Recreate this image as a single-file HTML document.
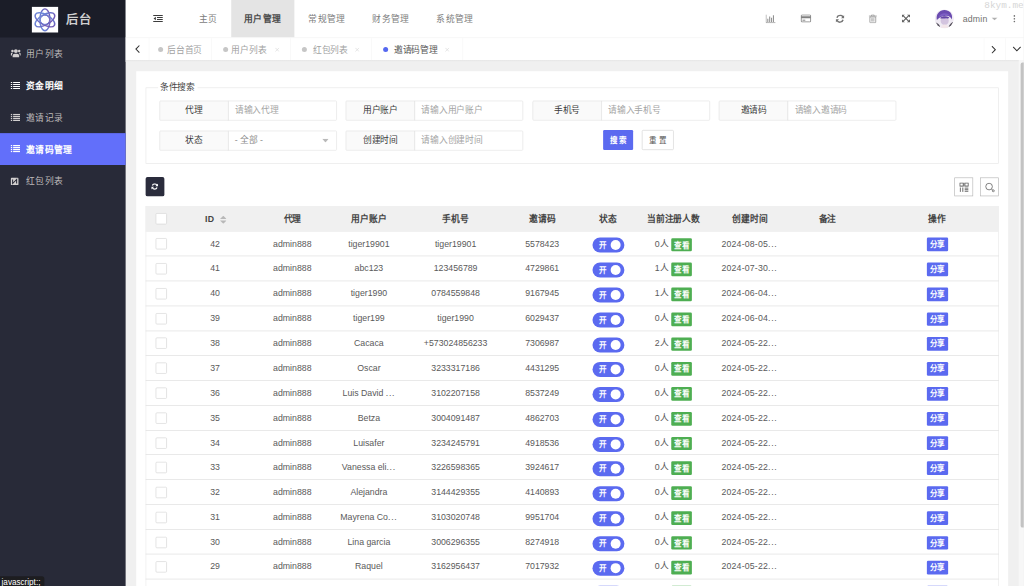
<!DOCTYPE html>
<html lang="zh-CN"><head><meta charset="utf-8"><title>后台</title>
<style>
*{box-sizing:border-box;margin:0;padding:0}
html,body{width:1024px;height:586px;overflow:hidden;background:#f0f0f0}
body{font-family:"Liberation Sans",sans-serif;font-size:14px;color:#666}
#wrap{position:absolute;left:0;top:0;width:1638.4px;height:937.6px;transform:scale(.625);transform-origin:0 0;overflow:hidden;background:#f0f0f0}
.abs{position:absolute}
svg{display:block}
/* sidebar */
#side{position:absolute;left:0;top:0;width:201.3px;height:937.6px;background:#282a38}
#logo{position:absolute;left:0;top:0;width:201.3px;height:60px;background:#1b1d28}
#logo .img{position:absolute;left:51.4px;top:11px;width:41.8px;height:40.8px;background:#fff}
#logo h1{position:absolute;left:105.3px;top:1px;height:60px;line-height:61px;font-size:19.6px;font-weight:bold;color:#d0d0d0;letter-spacing:1.6px;white-space:nowrap}
.mi{position:absolute;left:0;width:201.3px;height:51px;line-height:51px;color:#bebbbb;font-size:14px;letter-spacing:1px;white-space:nowrap}
.mi span{position:absolute;left:41.6px;top:1.2px}
.mi svg{position:absolute;left:17px;top:19px}
.mi.hov{color:#fff;font-weight:bold}
.mi.act{background:#626ffa;color:#fff;font-weight:bold}
/* header */
#hdr{position:absolute;left:201px;top:0;width:1437.4px;height:60px;background:#fff}
.nav{position:absolute;top:0;height:60px;line-height:60px;text-align:center;color:#7c7c7c;font-size:14px;letter-spacing:1px;white-space:nowrap}
.nav.this{background:#e4e4e4;color:#4a4a4a;font-weight:bold}
.hi{position:absolute}
/* tabs */
#tabs{position:absolute;left:201px;top:60px;width:1437.4px;height:36px;background:#fff;border-top:1px solid #f3f3f3}
.tab{position:absolute;top:0;height:35px;line-height:36px;font-size:14px;color:#a2a2a2;white-space:nowrap}
.tab.on{color:#555}
.dot{position:absolute;width:8px;height:8px;border-radius:50%;background:#cfcfcf}
.sep{position:absolute;top:0;width:1px;height:35px;background:#f6f6f6}
.x{position:absolute;top:0;font-size:13px;color:#c8c8c8}
/* card */
#card{position:absolute;left:217.6px;top:113.8px;width:1395.4px;height:900px;background:#fff}
fieldset{position:absolute;border:1px solid #e6e6e6;background:transparent}
.legend{position:absolute;background:#fff;padding:0 4px 0 3px;font-size:14px;color:#444;line-height:20px;white-space:nowrap}
.fg{position:absolute;height:32px;width:283.8px}
.fg .lb{position:absolute;left:0;top:0;width:111px;height:32px;line-height:29px;border:1px solid #e2e2e2;background:#fafafa;color:#3a3a3a;text-align:center;border-radius:2px 0 0 2px;font-size:14px;white-space:nowrap;overflow:hidden}
.fg .in{position:absolute;left:110px;top:0;width:173.8px;height:32px;line-height:28.5px;border:1px solid #e2e2e2;background:#fff;color:#a4a4a4;padding-left:10px;border-radius:0 2px 2px 0;font-size:14px;white-space:nowrap;overflow:hidden}
.btn{position:absolute;height:32px;line-height:32px;text-align:center;font-size:12px;border-radius:2px;white-space:nowrap}
/* table */
#thead{position:absolute;background:#f0f0f0}
.tr{position:absolute;border-bottom:1px solid #dcdcdc}
.c{position:absolute;top:0;text-align:center;white-space:nowrap;font-size:14px;color:#5a5a5a}
.th{font-weight:bold;color:#444}
.cb{position:absolute;width:18px;height:18px;border:1px solid #d4d4d4;border-radius:2px;background:#fff}
.sw{position:absolute;width:51px;height:24px;border-radius:12px;background:#5b6af0;font-weight:bold;color:#fff;font-size:12px;line-height:24px}
.sw i{position:absolute;right:6px;top:4px;width:16px;height:16px;border-radius:50%;background:#fff}
.sw em{position:absolute;left:10px;top:0;font-style:normal}
.el{letter-spacing:1.15px}
.gb{position:absolute;height:21.8px;line-height:22px;font-weight:bold;border-radius:2px;color:#fff;font-size:12px;text-align:center;white-space:nowrap;overflow:hidden}
</style></head>
<body><div id="wrap">
<div id="card"></div>
<fieldset style="left:232.96px;top:139.68px;width:1364.64px;height:122.24px"></fieldset>
<div class="legend" style="left:252.80px;top:129.28px">条件搜索</div>
<div class="fg" style="left:254.72px;top:160.80px"><div class="lb">代理</div><div class="in">请输入代理</div></div>
<div class="fg" style="left:553.28px;top:160.80px"><div class="lb">用户账户</div><div class="in">请输入用户账户</div></div>
<div class="fg" style="left:851.84px;top:160.80px"><div class="lb">手机号</div><div class="in">请输入手机号</div></div>
<div class="fg" style="left:1150.40px;top:160.80px"><div class="lb">邀请码</div><div class="in">请输入邀请码</div></div>
<div class="fg" style="left:254.72px;top:208.64px"><div class="lb">状态</div><div class="in" style="color:#8c8c8c">- 全部 -<svg class="abs" style="right:11.500px;top:12px" width="11.500" height="6" viewBox="0 0 12 7"><path d="M0 0h12L6 7z" fill="#b9b9b9"/></svg></div></div>
<div class="fg" style="left:553.28px;top:208.64px"><div class="lb">创建时间</div><div class="in">请输入创建时间</div></div>
<div class="btn" style="left:964.80px;top:208.32px;width:48.32px;background:#5b6af0;color:#fff;font-weight:bold">搜 索</div>
<div class="btn" style="left:1027.20px;top:208.32px;width:50.40px;background:#fff;color:#555;border:1px solid #d2d2d2;line-height:30px">重 置</div>
<div class="abs" style="left:232.64px;top:283.20px;width:30.56px;height:30.72px;background:#2a2c3c;border-radius:3px"><svg class="abs" style="left:9.8px;top:9.8px" width="11" height="11" viewBox="0 0 16 16"><path d="M13.400 5.600A5.800 5.800 0 0 0 2.600 5.600M2.600 10.400A5.800 5.800 0 0 0 13.400 10.400" fill="none" stroke="#fff" stroke-width="3"/><path d="M16 1v6.500h-6.500zM0 15v-6.500h6.500z" fill="#fff"/></svg></div>
<div class="abs" style="left:1526.88px;top:283.52px;width:30.56px;height:30.72px;background:#fff;border:1px solid #b4b4b4"><svg class="abs" style="left:7px;top:7px" width="15" height="15" viewBox="0 0 15 15"><rect x=".75" y=".75" width="5.5" height="5" fill="none" stroke="#555" stroke-width="1.5"/><rect x="8.75" y=".75" width="5.5" height="5" fill="none" stroke="#555" stroke-width="1.5"/><path d="M1.5 8v7M5.5 8v7M8.5 9h6M8.5 11.5h6M8.5 14h6" stroke="#555" stroke-width="1.4"/></svg></div>
<div class="abs" style="left:1567.52px;top:283.52px;width:30.56px;height:30.72px;background:#fff;border:1px solid #b4b4b4"><svg class="abs" style="left:7px;top:7px" width="16" height="16" viewBox="0 0 16 16"><circle cx="6.5" cy="6.5" r="5.3" fill="none" stroke="#666" stroke-width="1.3"/><path d="M10.5 10.5l2 2" stroke="#666" stroke-width="1.4"/><circle cx="13.3" cy="13.3" r="1.6" fill="none" stroke="#666" stroke-width="1.2"/></svg></div>
<div class="abs" style="left:232.96px;top:330.24px;width:1364.64px;height:640.00px;border:1px solid #e9e9e9;border-bottom:0"></div>
<div id="thead" style="left:232.96px;top:330.24px;width:1364.64px;height:40.32px;line-height:40.32px"><div class="cb" style="left:24.96px;top:50%;margin:-9px 0 0 -9px"></div><div class="c th" style="left:39.20px;width:144.00px"><span style="position:relative;left:-8.5px;letter-spacing:.6px">ID</span><svg class="abs" style="left:79.5px;top:14.5px" width="10.500" height="13" viewBox="0 0 9 13" preserveAspectRatio="none"><path d="M4.5 0L9 5.2H0z" fill="#b8b8b8"/><path d="M4.5 13L9 7.8H0z" fill="#b8b8b8"/></svg></div><div class="c th" style="left:162.72px;width:144.00px">代理</div><div class="c th" style="left:285.28px;width:144.00px">用户账户</div><div class="c th" style="left:424.00px;width:144.00px">手机号</div><div class="c th" style="left:562.56px;width:144.00px">邀请码</div><div class="c th" style="left:667.52px;width:144.00px">状态</div><div class="c th" style="left:772.48px;width:144.00px">当前注册人数</div><div class="c th" style="left:895.04px;width:144.00px">创建时间</div><div class="c th" style="left:1019.04px;width:144.00px">备注</div><div class="c th" style="left:1194.08px;width:144.00px">操作</div></div>
<div class="tr" style="left:232.96px;top:370.56px;width:1364.64px;height:39.76px;line-height:38.64px"><div class="cb" style="left:24.96px;top:50%;margin:-8.5px 0 0 -9px"></div><div class="c" style="left:39.20px;width:144.00px">42</div><div class="c" style="left:162.72px;width:144.00px">admin888</div><div class="c" style="left:285.28px;width:144.00px">tiger19901</div><div class="c" style="left:424.00px;width:144.00px">tiger19901</div><div class="c" style="left:562.56px;width:144.00px">5578423</div><div class="sw" style="left:714.72px;top:9.92px"><em>开</em><i></i></div><div class="c" style="left:791.04px;width:45.28px;text-align:right">0人</div><div class="gb" style="left:840.80px;top:10.00px;width:33.36px;background:#4eae52">查看</div><div class="c" style="left:921.44px;width:99.20px;text-align:left;letter-spacing:.28px">2024-08-05<span class="el">...</span></div><div class="gb" style="left:1249.60px;top:9.84px;width:34.08px;background:#5b6af0">分享</div></div>
<div class="tr" style="left:232.96px;top:410.32px;width:1364.64px;height:39.76px;line-height:38.64px"><div class="cb" style="left:24.96px;top:50%;margin:-8.5px 0 0 -9px"></div><div class="c" style="left:39.20px;width:144.00px">41</div><div class="c" style="left:162.72px;width:144.00px">admin888</div><div class="c" style="left:285.28px;width:144.00px">abc123</div><div class="c" style="left:424.00px;width:144.00px">123456789</div><div class="c" style="left:562.56px;width:144.00px">4729861</div><div class="sw" style="left:714.72px;top:9.92px"><em>开</em><i></i></div><div class="c" style="left:791.04px;width:45.28px;text-align:right">1人</div><div class="gb" style="left:840.80px;top:10.00px;width:33.36px;background:#4eae52">查看</div><div class="c" style="left:921.44px;width:99.20px;text-align:left;letter-spacing:.28px">2024-07-30<span class="el">...</span></div><div class="gb" style="left:1249.60px;top:9.84px;width:34.08px;background:#5b6af0">分享</div></div>
<div class="tr" style="left:232.96px;top:450.08px;width:1364.64px;height:39.76px;line-height:38.64px"><div class="cb" style="left:24.96px;top:50%;margin:-8.5px 0 0 -9px"></div><div class="c" style="left:39.20px;width:144.00px">40</div><div class="c" style="left:162.72px;width:144.00px">admin888</div><div class="c" style="left:285.28px;width:144.00px">tiger1990</div><div class="c" style="left:424.00px;width:144.00px">0784559848</div><div class="c" style="left:562.56px;width:144.00px">9167945</div><div class="sw" style="left:714.72px;top:9.92px"><em>开</em><i></i></div><div class="c" style="left:791.04px;width:45.28px;text-align:right">1人</div><div class="gb" style="left:840.80px;top:10.00px;width:33.36px;background:#4eae52">查看</div><div class="c" style="left:921.44px;width:99.20px;text-align:left;letter-spacing:.28px">2024-06-04<span class="el">...</span></div><div class="gb" style="left:1249.60px;top:9.84px;width:34.08px;background:#5b6af0">分享</div></div>
<div class="tr" style="left:232.96px;top:489.84px;width:1364.64px;height:39.76px;line-height:38.64px"><div class="cb" style="left:24.96px;top:50%;margin:-8.5px 0 0 -9px"></div><div class="c" style="left:39.20px;width:144.00px">39</div><div class="c" style="left:162.72px;width:144.00px">admin888</div><div class="c" style="left:285.28px;width:144.00px">tiger199</div><div class="c" style="left:424.00px;width:144.00px">tiger1990</div><div class="c" style="left:562.56px;width:144.00px">6029437</div><div class="sw" style="left:714.72px;top:9.92px"><em>开</em><i></i></div><div class="c" style="left:791.04px;width:45.28px;text-align:right">0人</div><div class="gb" style="left:840.80px;top:10.00px;width:33.36px;background:#4eae52">查看</div><div class="c" style="left:921.44px;width:99.20px;text-align:left;letter-spacing:.28px">2024-06-04<span class="el">...</span></div><div class="gb" style="left:1249.60px;top:9.84px;width:34.08px;background:#5b6af0">分享</div></div>
<div class="tr" style="left:232.96px;top:529.60px;width:1364.64px;height:39.76px;line-height:38.64px"><div class="cb" style="left:24.96px;top:50%;margin:-8.5px 0 0 -9px"></div><div class="c" style="left:39.20px;width:144.00px">38</div><div class="c" style="left:162.72px;width:144.00px">admin888</div><div class="c" style="left:285.28px;width:144.00px">Cacaca</div><div class="c" style="left:424.00px;width:144.00px">+573024856233</div><div class="c" style="left:562.56px;width:144.00px">7306987</div><div class="sw" style="left:714.72px;top:9.92px"><em>开</em><i></i></div><div class="c" style="left:791.04px;width:45.28px;text-align:right">2人</div><div class="gb" style="left:840.80px;top:10.00px;width:33.36px;background:#4eae52">查看</div><div class="c" style="left:921.44px;width:99.20px;text-align:left;letter-spacing:.28px">2024-05-22<span class="el">...</span></div><div class="gb" style="left:1249.60px;top:9.84px;width:34.08px;background:#5b6af0">分享</div></div>
<div class="tr" style="left:232.96px;top:569.36px;width:1364.64px;height:39.76px;line-height:38.64px"><div class="cb" style="left:24.96px;top:50%;margin:-8.5px 0 0 -9px"></div><div class="c" style="left:39.20px;width:144.00px">37</div><div class="c" style="left:162.72px;width:144.00px">admin888</div><div class="c" style="left:285.28px;width:144.00px">Oscar</div><div class="c" style="left:424.00px;width:144.00px">3233317186</div><div class="c" style="left:562.56px;width:144.00px">4431295</div><div class="sw" style="left:714.72px;top:9.92px"><em>开</em><i></i></div><div class="c" style="left:791.04px;width:45.28px;text-align:right">0人</div><div class="gb" style="left:840.80px;top:10.00px;width:33.36px;background:#4eae52">查看</div><div class="c" style="left:921.44px;width:99.20px;text-align:left;letter-spacing:.28px">2024-05-22<span class="el">...</span></div><div class="gb" style="left:1249.60px;top:9.84px;width:34.08px;background:#5b6af0">分享</div></div>
<div class="tr" style="left:232.96px;top:609.12px;width:1364.64px;height:39.76px;line-height:38.64px"><div class="cb" style="left:24.96px;top:50%;margin:-8.5px 0 0 -9px"></div><div class="c" style="left:39.20px;width:144.00px">36</div><div class="c" style="left:162.72px;width:144.00px">admin888</div><div class="c" style="left:285.28px;width:144.00px">Luis David <span class="el">...</span></div><div class="c" style="left:424.00px;width:144.00px">3102207158</div><div class="c" style="left:562.56px;width:144.00px">8537249</div><div class="sw" style="left:714.72px;top:9.92px"><em>开</em><i></i></div><div class="c" style="left:791.04px;width:45.28px;text-align:right">0人</div><div class="gb" style="left:840.80px;top:10.00px;width:33.36px;background:#4eae52">查看</div><div class="c" style="left:921.44px;width:99.20px;text-align:left;letter-spacing:.28px">2024-05-22<span class="el">...</span></div><div class="gb" style="left:1249.60px;top:9.84px;width:34.08px;background:#5b6af0">分享</div></div>
<div class="tr" style="left:232.96px;top:648.88px;width:1364.64px;height:39.76px;line-height:38.64px"><div class="cb" style="left:24.96px;top:50%;margin:-8.5px 0 0 -9px"></div><div class="c" style="left:39.20px;width:144.00px">35</div><div class="c" style="left:162.72px;width:144.00px">admin888</div><div class="c" style="left:285.28px;width:144.00px">Betza</div><div class="c" style="left:424.00px;width:144.00px">3004091487</div><div class="c" style="left:562.56px;width:144.00px">4862703</div><div class="sw" style="left:714.72px;top:9.92px"><em>开</em><i></i></div><div class="c" style="left:791.04px;width:45.28px;text-align:right">0人</div><div class="gb" style="left:840.80px;top:10.00px;width:33.36px;background:#4eae52">查看</div><div class="c" style="left:921.44px;width:99.20px;text-align:left;letter-spacing:.28px">2024-05-22<span class="el">...</span></div><div class="gb" style="left:1249.60px;top:9.84px;width:34.08px;background:#5b6af0">分享</div></div>
<div class="tr" style="left:232.96px;top:688.64px;width:1364.64px;height:39.76px;line-height:38.64px"><div class="cb" style="left:24.96px;top:50%;margin:-8.5px 0 0 -9px"></div><div class="c" style="left:39.20px;width:144.00px">34</div><div class="c" style="left:162.72px;width:144.00px">admin888</div><div class="c" style="left:285.28px;width:144.00px">Luisafer</div><div class="c" style="left:424.00px;width:144.00px">3234245791</div><div class="c" style="left:562.56px;width:144.00px">4918536</div><div class="sw" style="left:714.72px;top:9.92px"><em>开</em><i></i></div><div class="c" style="left:791.04px;width:45.28px;text-align:right">0人</div><div class="gb" style="left:840.80px;top:10.00px;width:33.36px;background:#4eae52">查看</div><div class="c" style="left:921.44px;width:99.20px;text-align:left;letter-spacing:.28px">2024-05-22<span class="el">...</span></div><div class="gb" style="left:1249.60px;top:9.84px;width:34.08px;background:#5b6af0">分享</div></div>
<div class="tr" style="left:232.96px;top:728.40px;width:1364.64px;height:39.76px;line-height:38.64px"><div class="cb" style="left:24.96px;top:50%;margin:-8.5px 0 0 -9px"></div><div class="c" style="left:39.20px;width:144.00px">33</div><div class="c" style="left:162.72px;width:144.00px">admin888</div><div class="c" style="left:285.28px;width:144.00px">Vanessa eli<span class="el">...</span></div><div class="c" style="left:424.00px;width:144.00px">3226598365</div><div class="c" style="left:562.56px;width:144.00px">3924617</div><div class="sw" style="left:714.72px;top:9.92px"><em>开</em><i></i></div><div class="c" style="left:791.04px;width:45.28px;text-align:right">0人</div><div class="gb" style="left:840.80px;top:10.00px;width:33.36px;background:#4eae52">查看</div><div class="c" style="left:921.44px;width:99.20px;text-align:left;letter-spacing:.28px">2024-05-22<span class="el">...</span></div><div class="gb" style="left:1249.60px;top:9.84px;width:34.08px;background:#5b6af0">分享</div></div>
<div class="tr" style="left:232.96px;top:768.16px;width:1364.64px;height:39.76px;line-height:38.64px"><div class="cb" style="left:24.96px;top:50%;margin:-8.5px 0 0 -9px"></div><div class="c" style="left:39.20px;width:144.00px">32</div><div class="c" style="left:162.72px;width:144.00px">admin888</div><div class="c" style="left:285.28px;width:144.00px">Alejandra</div><div class="c" style="left:424.00px;width:144.00px">3144429355</div><div class="c" style="left:562.56px;width:144.00px">4140893</div><div class="sw" style="left:714.72px;top:9.92px"><em>开</em><i></i></div><div class="c" style="left:791.04px;width:45.28px;text-align:right">0人</div><div class="gb" style="left:840.80px;top:10.00px;width:33.36px;background:#4eae52">查看</div><div class="c" style="left:921.44px;width:99.20px;text-align:left;letter-spacing:.28px">2024-05-22<span class="el">...</span></div><div class="gb" style="left:1249.60px;top:9.84px;width:34.08px;background:#5b6af0">分享</div></div>
<div class="tr" style="left:232.96px;top:807.92px;width:1364.64px;height:39.76px;line-height:38.64px"><div class="cb" style="left:24.96px;top:50%;margin:-8.5px 0 0 -9px"></div><div class="c" style="left:39.20px;width:144.00px">31</div><div class="c" style="left:162.72px;width:144.00px">admin888</div><div class="c" style="left:285.28px;width:144.00px">Mayrena Co<span class="el">...</span></div><div class="c" style="left:424.00px;width:144.00px">3103020748</div><div class="c" style="left:562.56px;width:144.00px">9951704</div><div class="sw" style="left:714.72px;top:9.92px"><em>开</em><i></i></div><div class="c" style="left:791.04px;width:45.28px;text-align:right">0人</div><div class="gb" style="left:840.80px;top:10.00px;width:33.36px;background:#4eae52">查看</div><div class="c" style="left:921.44px;width:99.20px;text-align:left;letter-spacing:.28px">2024-05-22<span class="el">...</span></div><div class="gb" style="left:1249.60px;top:9.84px;width:34.08px;background:#5b6af0">分享</div></div>
<div class="tr" style="left:232.96px;top:847.68px;width:1364.64px;height:39.76px;line-height:38.64px"><div class="cb" style="left:24.96px;top:50%;margin:-8.5px 0 0 -9px"></div><div class="c" style="left:39.20px;width:144.00px">30</div><div class="c" style="left:162.72px;width:144.00px">admin888</div><div class="c" style="left:285.28px;width:144.00px">Lina garcia</div><div class="c" style="left:424.00px;width:144.00px">3006296355</div><div class="c" style="left:562.56px;width:144.00px">8274918</div><div class="sw" style="left:714.72px;top:9.92px"><em>开</em><i></i></div><div class="c" style="left:791.04px;width:45.28px;text-align:right">0人</div><div class="gb" style="left:840.80px;top:10.00px;width:33.36px;background:#4eae52">查看</div><div class="c" style="left:921.44px;width:99.20px;text-align:left;letter-spacing:.28px">2024-05-22<span class="el">...</span></div><div class="gb" style="left:1249.60px;top:9.84px;width:34.08px;background:#5b6af0">分享</div></div>
<div class="tr" style="left:232.96px;top:887.44px;width:1364.64px;height:39.76px;line-height:38.64px"><div class="cb" style="left:24.96px;top:50%;margin:-8.5px 0 0 -9px"></div><div class="c" style="left:39.20px;width:144.00px">29</div><div class="c" style="left:162.72px;width:144.00px">admin888</div><div class="c" style="left:285.28px;width:144.00px">Raquel</div><div class="c" style="left:424.00px;width:144.00px">3162956437</div><div class="c" style="left:562.56px;width:144.00px">7017932</div><div class="sw" style="left:714.72px;top:9.92px"><em>开</em><i></i></div><div class="c" style="left:791.04px;width:45.28px;text-align:right">0人</div><div class="gb" style="left:840.80px;top:10.00px;width:33.36px;background:#4eae52">查看</div><div class="c" style="left:921.44px;width:99.20px;text-align:left;letter-spacing:.28px">2024-05-22<span class="el">...</span></div><div class="gb" style="left:1249.60px;top:9.84px;width:34.08px;background:#5b6af0">分享</div></div>
<div class="tr" style="left:232.96px;top:927.20px;width:1364.64px;height:39.76px;line-height:38.64px"><div class="cb" style="left:24.96px;top:50%;margin:-8.5px 0 0 -9px"></div><div class="c" style="left:39.20px;width:144.00px"></div><div class="c" style="left:162.72px;width:144.00px"></div><div class="c" style="left:285.28px;width:144.00px"></div><div class="c" style="left:424.00px;width:144.00px"></div><div class="c" style="left:562.56px;width:144.00px"></div><div class="sw" style="left:714.72px;top:9.92px"><em>开</em><i></i></div><div class="c" style="left:791.04px;width:45.28px;text-align:right"></div><div class="gb" style="left:840.80px;top:10.00px;width:33.36px;background:#4eae52">查看</div><div class="c" style="left:921.44px;width:99.20px;text-align:left;letter-spacing:.28px"></div><div class="gb" style="left:1249.60px;top:9.84px;width:34.08px;background:#5b6af0">分享</div></div>
<div id="side"><div id="logo"><div class="img"><svg width="41.8" height="40.8" viewBox="0 0 42 41"><defs><linearGradient id="lg" gradientUnits="userSpaceOnUse" x1="-18" y1="8" x2="18" y2="-8"><stop offset="0" stop-color="#6f9be6"/><stop offset=".55" stop-color="#6b6fc8"/><stop offset="1" stop-color="#7b45a0"/></linearGradient></defs><g fill="none" stroke="url(#lg)" stroke-width="2.3" transform="translate(21 20.8)"><ellipse rx="8.2" ry="17.6"/><ellipse rx="8.2" ry="17.6" transform="rotate(60)"/><ellipse rx="8.2" ry="17.6" transform="rotate(120)"/><circle r="7.4" stroke-width="1.6"/></g></svg></div><h1>后台</h1></div>
<div class="mi " style="top:60px"><svg style="left:16.600px;top:17.700px" width="16.800" height="14.600" viewBox="0 0 16 14"><circle cx="8" cy="3.6" r="3" fill="#d2cfcf"/><path d="M3 13.5v-2.7c0-2 1.5-3.3 3.3-3.3h3.4c1.800 0 3.300 1.300 3.300 3.300v2.700z" fill="#d2cfcf"/><circle cx="2.8" cy="3.4" r="2" fill="#d2cfcf"/><circle cx="13.2" cy="3.400" r="2" fill="#d2cfcf"/><path d="M0 10.500v-2.200c0-1.400 1-2.200 2.200-2.200h1.600c-1.200 0.900-1.800 2-1.800 3.500v0.900zM16 10.500v-2.200c0-1.400-1-2.200-2.200-2.200h-1.600c1.200 0.900 1.800 2 1.800 3.500v0.900z" fill="#d2cfcf"/></svg><span>用户列表</span></div>
<div class="mi hov" style="top:111px"><svg style="top:20.20px" width="15" height="11.500" viewBox="0 0 15 11.500"><path d="M0 0h2.500v1.900h-2.500zM4 0h11v1.900h-11zM0 3.200h2.500v1.900h-2.500zM4 3.200h11v1.900h-11zM0 6.400h2.500v1.900h-2.500zM4 6.400h11v1.900h-11zM0 9.600h2.500v1.900h-2.500zM4 9.600h11v1.900h-11z" fill="#fff"/></svg><span>资金明细</span></div>
<div class="mi " style="top:162px"><svg style="top:20.40px" width="15" height="11.500" viewBox="0 0 15 11.500"><path d="M0 0h2.500v1.900h-2.500zM4 0h11v1.900h-11zM0 3.200h2.500v1.900h-2.500zM4 3.200h11v1.900h-11zM0 6.400h2.500v1.900h-2.500zM4 6.400h11v1.900h-11zM0 9.600h2.500v1.900h-2.500zM4 9.600h11v1.900h-11z" fill="#d2cfcf"/></svg><span>邀请记录</span></div>
<div class="mi act" style="top:213px"><svg style="top:19.00px" width="15" height="11.500" viewBox="0 0 15 11.500"><path d="M0 0h2.500v1.900h-2.500zM4 0h11v1.900h-11zM0 3.200h2.500v1.900h-2.500zM4 3.200h11v1.900h-11zM0 6.400h2.500v1.900h-2.500zM4 6.400h11v1.900h-11zM0 9.600h2.500v1.900h-2.500zM4 9.600h11v1.900h-11z" fill="#fff"/></svg><span>邀请码管理</span></div>
<div class="mi " style="top:264px"><svg style="top:19.6px;left:17.3px" width="12.800" height="12.800" viewBox="0 0 14 14"><rect width="14" height="14" rx="2.5" fill="#d2cfcf"/><path d="M3.500 3.500v7l7-7v7" fill="none" stroke="#282a38" stroke-width="1.800"/></svg><span>红包列表</span></div>
</div>
<div id="hdr"><svg class="abs" style="left:44.28px;top:24.00px" width="15.400" height="11.400" viewBox="0 0 15 11"><path d="M0 0h15v1.700h-15zM6 3.100h9v1.700h-9zM6 6.200h9v1.700h-9zM0 9.300h15v1.700h-15z" fill="#3c3c3c"/><path d="M4.300 2.700v5.600l-3.700-2.800z" fill="#3c3c3c"/></svg><div class="nav " style="left:96.60px;width:72.00px">主页</div><div class="nav this" style="left:168.60px;width:101.60px">用户管理</div><div class="nav " style="left:271.00px;width:102.40px">常规管理</div><div class="nav " style="left:373.40px;width:102.40px">财务管理</div><div class="nav " style="left:475.80px;width:102.40px">系统管理</div><div class="hi" style="left:1023.96px;top:22.92px"><svg width="16" height="14" viewBox="0 0 16 14"><path d="M.6 0v13.400h15.400" fill="none" stroke="#929292" stroke-width="1.300"/><path d="M3.500 7v5M6.500 3.500v8.500M9.500 5.500v6.500M12.500 1.500v10.500" stroke="#929292" stroke-width="1.700"/></svg></div><div class="hi" style="left:1080.10px;top:23.42px"><svg width="17" height="13" viewBox="0 0 17 13"><rect x=".8" y=".8" width="15.400" height="11.400" rx="1.500" fill="none" stroke="#808080" stroke-width="1.600"/><path d="M.7 3h15.600v3h-15.600z" fill="#808080"/><path d="M3 9.300h4.500" stroke="#808080" stroke-width="1.500"/></svg></div><div class="hi" style="left:1136.00px;top:22.92px"><svg width="14" height="14" viewBox="0 0 16 16"><path d="M13.600 5.200A6 6 0 0 0 2.400 6.200M2.400 10.800A6 6 0 0 0 13.600 9.800" fill="none" stroke="#747474" stroke-width="2.700"/><path d="M15.800 1v6h-6zM.2 15v-6h6z" fill="#747474"/></svg></div><div class="hi" style="left:1189.30px;top:22.92px"><svg width="13" height="14" viewBox="0 0 13 14"><path d="M0 2.700h13M4.500 2.500v-1.800h4v1.800" fill="none" stroke="#929292" stroke-width="1.300"/><path d="M1.800 4.200h9.400v8.300c0 .6-.4 1-1 1h-7.400c-.6 0-1-.4-1-1z" fill="none" stroke="#929292" stroke-width="1.300"/><path d="M4.700 6v5.500M6.500 6v5.500M8.300 6v5.500" stroke="#929292" stroke-width="1"/></svg></div><div class="hi" style="left:1242.10px;top:23.42px"><svg width="13" height="13" viewBox="0 0 14 14"><path d="M2.500 2.500l9 9M11.500 2.500l-9 9" stroke="#606060" stroke-width="2"/><path d="M0 0h5.400l-5.400 5.400zM14 0v5.400l-5.400-5.400zM0 14v-5.400l5.400 5.400zM14 14h-5.400l5.400-5.400z" fill="#606060"/></svg></div><div class="abs" style="left:1295.20px;top:14.92px;width:30px;height:30px;border-radius:50%;overflow:hidden;background:#efeaf3"><svg width="30" height="30" viewBox="0 0 30 30"><rect width="30" height="30" fill="#efeaf3"/><path d="M3 17c-2-9 4-16 12-16s14 6 12 15c-2-4-5-6-8-6-5 0-10 1-16 7z" fill="#6a4bb0"/><path d="M6 12c3-6 12-8 18-2-4-1-8-1-11 0s-5 1-7 2z" fill="#7d5fc4"/><ellipse cx="15.500" cy="18" rx="6.500" ry="7" fill="#d3c4df"/><path d="M8 14c3-3 10-4 15-1-1 2-3 2-5 1-3 1-7 1-10 0z" fill="#6345a6"/><path d="M0 21c3 0 6 2 8 6l-1 3h-7zM30 20c-3 0-6 3-8 7l1 3h7z" fill="#56525c"/><path d="M10 30c0-4 2-6 5.500-6s5.500 2 5.500 6z" fill="#f3e6ea"/></svg></div><div class="abs" style="left:1339.48px;top:0;height:60px;line-height:60px;color:#707070;font-size:14px;letter-spacing:.25px">admin</div><svg class="abs" style="left:1385.08px;top:28.30px" width="10.500" height="4.500" viewBox="0 0 11 5"><path d="M0 0h11l-5.500 5z" fill="#b0b0b0"/></svg><svg class="abs" style="left:1419.80px;top:23.52px" width="4" height="12" viewBox="0 0 4 12"><circle cx="2" cy="1.500" r="1.350" fill="#707070"/><circle cx="2" cy="6" r="1.350" fill="#707070"/><circle cx="2" cy="10.500" r="1.350" fill="#707070"/></svg><div class="abs" style="left:1373.88px;top:.8px;font-family:'Liberation Mono',monospace;font-size:15px;line-height:17px;color:#d6d6d6;white-space:nowrap">8kym.me</div></div>
<div id="tabs"><svg class="abs" style="left:15.16px;top:10.5px" width="8" height="13" viewBox="0 0 8 13"><path d="M7 .8L1.500 6.500 7 12.200" fill="none" stroke="#333" stroke-width="1.700"/></svg><div class="sep" style="left:37.40px"></div><div class="sep" style="left:136.60px"></div><div class="sep" style="left:263.48px"></div><div class="sep" style="left:392.60px"></div><div class="sep" style="left:539.00px"></div><div class="dot" style="left:52.12px;top:14px;background:#c6c6c6"></div><div class="tab " style="left:66.52px">后台首页</div><div class="dot" style="left:156.12px;top:14px;background:#c6c6c6"></div><div class="tab " style="left:169.40px">用户列表</div><svg class="abs" style="left:238.70px;top:15px" width="7" height="7" viewBox="0 0 7 7"><path d="M.5.5l6 6M6.500.5l-6 6" stroke="#d4d4d4" stroke-width="1"/></svg><div class="dot" style="left:281.56px;top:14px;background:#c6c6c6"></div><div class="tab " style="left:299.80px">红包列表</div><svg class="abs" style="left:366.70px;top:15px" width="7" height="7" viewBox="0 0 7 7"><path d="M.5.5l6 6M6.500.5l-6 6" stroke="#d4d4d4" stroke-width="1"/></svg><div class="dot" style="left:412.12px;top:14px;background:#5568f0"></div><div class="tab on" style="left:429.40px">邀请码管理</div><svg class="abs" style="left:511.34px;top:15px" width="7" height="7" viewBox="0 0 7 7"><path d="M.5.5l6 6M6.500.5l-6 6" stroke="#d4d4d4" stroke-width="1"/></svg><div class="sep" style="left:1372.60px;background:#f8f8f8"></div><div class="sep" style="left:1407.48px;background:#f6f6f6"></div><svg class="abs" style="left:1385.24px;top:11.5px" width="8" height="13" viewBox="0 0 8 13"><path d="M1 .8l5.500 5.700L1 12.200" fill="none" stroke="#333" stroke-width="1.700"/></svg><svg class="abs" style="left:1418.68px;top:13px" width="14" height="9" viewBox="0 0 14 9"><path d="M1 1l6 6.200L13 1" fill="none" stroke="#333" stroke-width="1.700"/></svg></div>
<div class="abs" style="left:201px;top:96px;width:1437.4px;height:3px;background:linear-gradient(#e6e6e6,#f0f0f0)"></div>
<div class="abs" style="left:1630.08px;top:96.48px;width:9.60px;height:841.6px;background:#f7f7f7"></div><div class="abs" style="left:1632.80px;top:100.16px;width:6.40px;height:743.84px;background:#c3c3c3;border-radius:3px 0 0 3px"></div>
<div class="abs" style="left:0;top:922.08px;width:71.36px;height:16.00px;background:#1d1d20;color:#fff;font-size:13px;line-height:20px;padding-left:2.5px;border-top-right-radius:4px;white-space:nowrap;overflow:hidden">javascript:;</div>
</div></body></html>
